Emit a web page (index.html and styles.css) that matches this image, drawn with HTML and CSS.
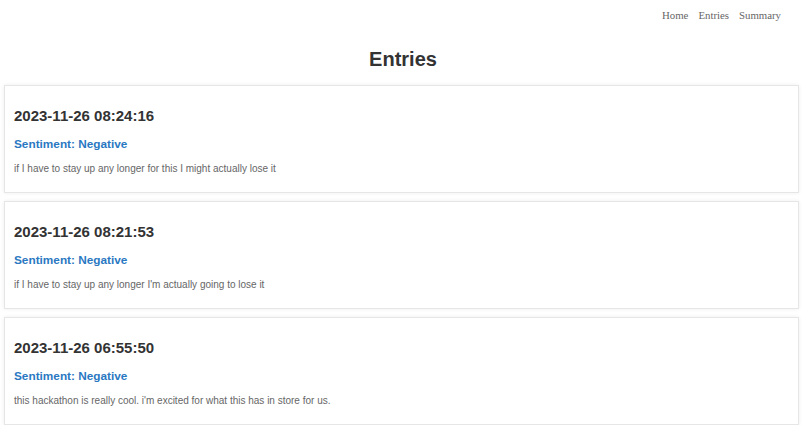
FILE: index.html
```html
<!DOCTYPE html>
<html>
<head>
<meta charset="utf-8">
<link rel="stylesheet" href="styles.css">
</head>
<body>
<nav class="nav">
  <a href="#">Home</a>
  <a href="#">Entries</a>
  <a href="#">Summary</a>
</nav>
<h1 class="title">Entries</h1>
<main class="list">
  <section class="card">
    <h2 class="stamp">2023-11-26 08:24:16</h2>
    <h3 class="sentiment">Sentiment: Negative</h3>
    <p class="text">if I have to stay up any longer for this I might actually lose it</p>
  </section>
  <section class="card">
    <h2 class="stamp">2023-11-26 08:21:53</h2>
    <h3 class="sentiment">Sentiment: Negative</h3>
    <p class="text">if I have to stay up any longer I'm actually going to lose it</p>
  </section>
  <section class="card">
    <h2 class="stamp">2023-11-26 06:55:50</h2>
    <h3 class="sentiment">Sentiment: Negative</h3>
    <p class="text">this hackathon is really cool. i'm excited for what this has in store for us.</p>
  </section>
</main>
</body>
</html>
```

FILE: styles.css
```css
html, body {
  margin: 0;
  padding: 0;
  background: #fff;
  overflow: hidden;
}
body {
  font-family: "Liberation Sans", Arial, sans-serif;
  color: #333;
}
.nav {
  display: flex;
  justify-content: flex-end;
  gap: 10px;
  padding: 8px 25px 0 0;
  height: 14px;
  font-family: "Liberation Serif", "Times New Roman", serif;
  font-size: 10.8px;
  line-height: 14px;
}
.nav a {
  color: #666;
  text-decoration: none;
}
.title {
  margin: 0;
  padding-top: 25px;
  text-align: center;
  font-size: 20px;
  line-height: 24px;
  font-weight: bold;
  color: #333;
}
.list {
  display: flex;
  flex-direction: column;
  gap: 8px;
  margin: 14px 7px 0 4px;
}
.card {
  box-sizing: border-box;
  height: 108px;
  border: 1px solid #e6e6e6;
  box-shadow: 0 0 4px rgba(0,0,0,0.07);
  background: #fff;
  padding: 21px 9px 0 9px;
}
.stamp {
  margin: 0;
  font-size: 15px;
  line-height: 18px;
  font-weight: bold;
  color: #333;
}
.sentiment {
  margin: 12px 0 0 0;
  font-size: 11.8px;
  line-height: 14px;
  font-weight: bold;
  color: #2a78c2;
}
.text {
  margin: 12px 0 0 0;
  font-size: 10px;
  line-height: 12px;
  color: #666;
}
```
